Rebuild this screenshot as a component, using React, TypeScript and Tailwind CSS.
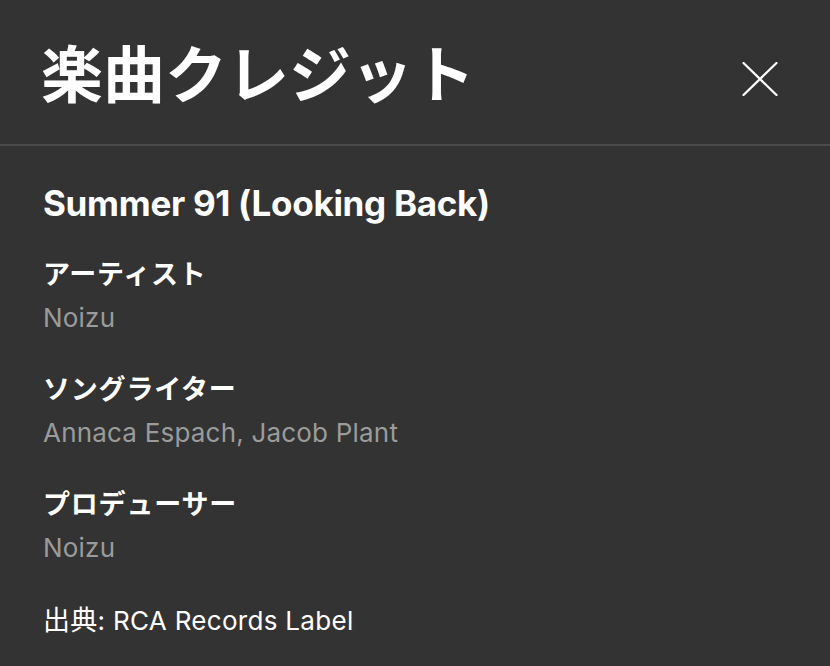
import React from 'react';

const latin = "font-['Inter','Noto_Sans_CJK_JP',sans-serif]";
const cjk = "font-['Noto_Sans_CJK_JP',sans-serif]";

const credits = [
  { role: 'アーティスト', names: 'Noizu' },
  { role: 'ソングライター', names: 'Annaca Espach, Jacob Plant' },
  { role: 'プロデューサー', names: 'Noizu' },
];

const App: React.FC = () => {
  return (
    <div className={`w-[830px] h-[666px] bg-[#333333] text-white overflow-hidden ${latin}`}>
      {/* Header */}
      <div className="h-[144px] flex items-center justify-between pl-[41px] pr-[52px]">
        <h1 className={`text-[62px] font-bold leading-none -mt-[2px] ${cjk}`}>楽曲クレジット</h1>
        <button className="w-[36px] h-[36px] flex items-center justify-center mt-[13px]" title="Close">
          <svg width="36" height="34" viewBox="0 0 36 34" fill="none" stroke="white" strokeWidth="2.2" strokeLinecap="round">
            <path d="M1.5 1 L34.5 33 M34.5 1 L1.5 33" />
          </svg>
        </button>
      </div>
      <div className="h-[2px] bg-[#4b4b4b]" />

      {/* Body */}
      <div className="px-[43px] pt-[37px]">
        <h2 className="text-[35px] font-bold leading-[40px] tracking-[-0.3px]">Summer 91 (Looking Back)</h2>

        {credits.map((c, i) => (
          <div key={c.role} className={i === 0 ? 'mt-[32px]' : 'mt-[34px]'}>
            <p className={`text-[27px] font-bold leading-[36px] tracking-[0.8px] ${cjk}`}>{c.role}</p>
            <p className="text-[26px] leading-[36px] mt-[9px] tracking-[0.2px] text-[#9b9b9b]">{c.names}</p>
          </div>
        ))}

        <p className="text-[26px] leading-[36px] mt-[35px] tracking-[0.3px]">
          <span className={`text-[27px] ${cjk}`}>出典</span>: RCA Records Label
        </p>
      </div>
    </div>
  );
};

export default App;
